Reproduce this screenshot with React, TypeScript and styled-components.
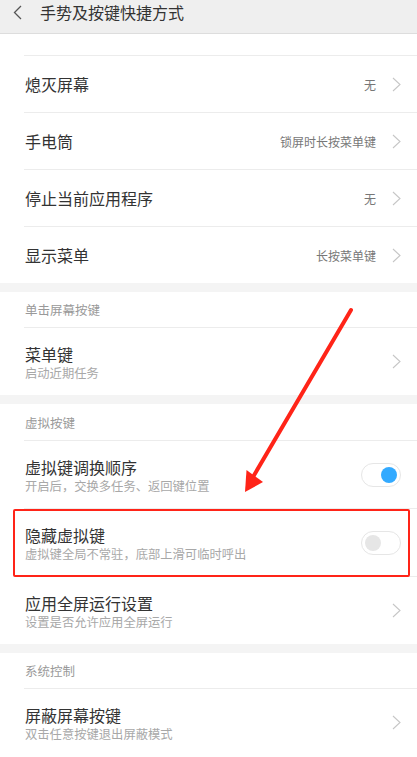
import styled, { createGlobalStyle } from "styled-components";

const GlobalStyle = createGlobalStyle`
  html, body {
    margin: 0;
    padding: 0;
    background: #ffffff;
  }
  body {
    font-family: "Noto Sans CJK SC", "Noto Sans", sans-serif;
    -webkit-font-smoothing: antialiased;
  }
`

const Page = styled.div`
  position: relative;
  width: 417px;
  height: 757px;
  overflow: hidden;
  background: #ffffff;
`

const Header = styled.div`
  height: 34px;
  display: flex;
  align-items: flex-start;
  padding-top: 1px;
  box-sizing: border-box;
  background: #efefef;
  border-bottom: 1px solid #dddddd;
`

const BackButton = styled.div`
  width: 40px;
  height: 22px;
  display: flex;
  align-items: center;
  padding-left: 13px;
  box-sizing: border-box;
`

const HeaderTitle = styled.div`
  font-size: 16px;
  line-height: 22px;
  color: #333333;
`

const Spacer = styled.div`
  height: 21px;
  margin-left: 24px;
  border-bottom: 1px solid #ececec;
`

const Row = styled.div<{ $tall?: boolean; $last?: boolean }>`
  position: relative;
  display: flex;
  align-items: center;
  height: ${(p) => (p.$tall ? "67px" : "56px")};
  margin-left: 24px;
  padding-left: 1px;
  padding-right: 16px;
  border-bottom: ${(p) => (p.$last ? "none" : "1px solid #ececec")};
`

const TextBlock = styled.div`
  flex: 1;
  display: flex;
  flex-direction: column;
`

const Title = styled.div`
  font-size: 16px;
  line-height: 22px;
  color: #333333;
`

const Subtitle = styled.div`
  font-size: 12.3px;
  line-height: 16px;
  color: #a8a8a8;
`

const Value = styled.div`
  font-size: 12px;
  color: #777777;
  margin-right: 16px;
`

const Gap = styled.div`
  height: 9px;
  background: #f4f4f4;
`

const SectionHeader = styled.div<{ $h?: number }>`
  display: flex;
  align-items: center;
  height: ${(p) => p.$h ?? 35}px;
  margin-left: 24px;
  padding-left: 1px;
  font-size: 12.5px;
  color: #999999;
  border-bottom: 1px solid #ececec;
`

const Switch = styled.div<{ $on?: boolean }>`
  width: 40px;
  height: 24px;
  box-sizing: border-box;
  border: 1px solid #e6e6e6;
  border-radius: 12px;
  background: #ffffff;
  display: flex;
  align-items: center;
  justify-content: ${(p) => (p.$on ? "flex-end" : "flex-start")};
  padding: 0 3px;
`

const Knob = styled.div<{ $on?: boolean }>`
  width: 16px;
  height: 16px;
  border-radius: 50%;
  background: ${(p) => (p.$on ? "#33aaff" : "#e6e6e6")};
`

const Highlight = styled.div`
  position: absolute;
  left: -11px;
  right: 7px;
  top: 0;
  bottom: -1px;
  border: 2px solid #ff2418;
  border-radius: 2px;
  pointer-events: none;
`

const ArrowLayer = styled.svg`
  position: absolute;
  left: 0;
  top: 0;
  pointer-events: none;
`

const Chevron = () => (
  <svg width="9" height="15" viewBox="0 0 9 15">
    <polyline points="1,1 8,7.5 1,14" fill="none" stroke="#c6c6c6" strokeWidth="1.1" />
  </svg>
)

const BackChevron = () => (
  <svg width="9" height="15" viewBox="0 0 9 15">
    <polyline points="8,1 1.5,7.5 8,14" fill="none" stroke="#555555" strokeWidth="1.3" />
  </svg>
)

type Item = { title: string; value: string }

const shortcuts: Item[] = [
  { title: "熄灭屏幕", value: "无" },
  { title: "手电筒", value: "锁屏时长按菜单键" },
  { title: "停止当前应用程序", value: "无" },
  { title: "显示菜单", value: "长按菜单键" },
]

const App = () => {
  return (
    <Page>
      <GlobalStyle />
      <Header>
        <BackButton>
          <BackChevron />
        </BackButton>
        <HeaderTitle>手势及按键快捷方式</HeaderTitle>
      </Header>
      <Spacer />
      {shortcuts.map((s, i) => (
        <Row key={s.title} $last={i === shortcuts.length - 1}>
          <TextBlock>
            <Title>{s.title}</Title>
          </TextBlock>
          <Value>{s.value}</Value>
          <Chevron />
        </Row>
      ))}
      <Gap />
      <SectionHeader>单击屏幕按键</SectionHeader>
      <Row $tall $last>
        <TextBlock>
          <Title>菜单键</Title>
          <Subtitle>启动近期任务</Subtitle>
        </TextBlock>
        <Chevron />
      </Row>
      <Gap />
      <SectionHeader $h={36}>虚拟按键</SectionHeader>
      <Row $tall>
        <TextBlock>
          <Title>虚拟键调换顺序</Title>
          <Subtitle>开启后，交换多任务、返回键位置</Subtitle>
        </TextBlock>
        <Switch $on>
          <Knob $on />
        </Switch>
      </Row>
      <Row $tall>
        <TextBlock>
          <Title>隐藏虚拟键</Title>
          <Subtitle>虚拟键全局不常驻，底部上滑可临时呼出</Subtitle>
        </TextBlock>
        <Switch>
          <Knob />
        </Switch>
        <Highlight />
      </Row>
      <Row $tall $last>
        <TextBlock>
          <Title>应用全屏运行设置</Title>
          <Subtitle>设置是否允许应用全屏运行</Subtitle>
        </TextBlock>
        <Chevron />
      </Row>
      <Gap />
      <SectionHeader>系统控制</SectionHeader>
      <Row $tall $last>
        <TextBlock>
          <Title>屏蔽屏幕按键</Title>
          <Subtitle>双击任意按键退出屏蔽模式</Subtitle>
        </TextBlock>
        <Chevron />
      </Row>

      {/* red annotation arrow drawn on top */}
      <ArrowLayer width="417" height="757" viewBox="0 0 417 757">
        <line x1="351" y1="310" x2="253" y2="477" stroke="#ff2418" strokeWidth="4" strokeLinecap="round" />
        <polygon points="245,492 246.5,470 263,482" fill="#ff2418" />
      </ArrowLayer>
    </Page>
  )
}

export default App;
